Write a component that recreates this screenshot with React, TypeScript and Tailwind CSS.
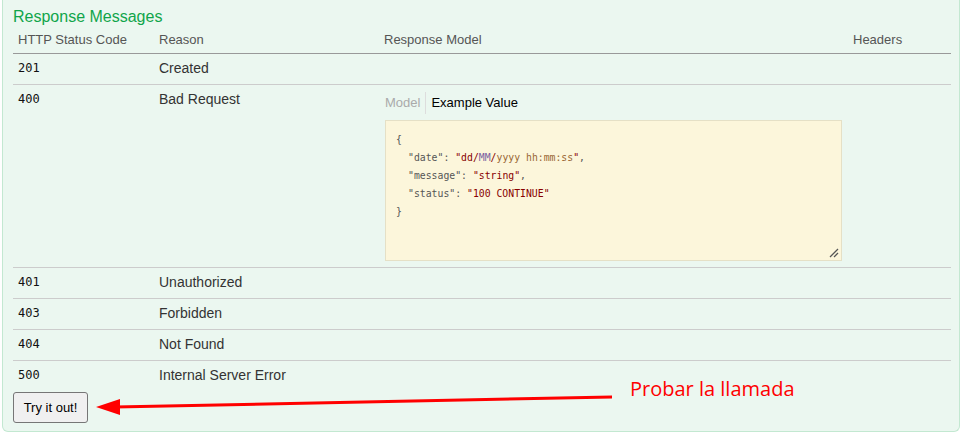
import React from "react";

const sans = { fontFamily: '"Liberation Sans", Arial, sans-serif' };
const mono = { fontFamily: '"DejaVu Sans Mono", monospace' };

function Row({ code, reason, children, last }: { code: string; reason: string; children?: React.ReactNode; last?: boolean }) {
  return (
    <tr className={last ? "" : "border-b border-[#cccccc]"}>
      <td className="pl-[5px] pt-[6px] pb-[8px] align-top text-[12px] leading-[16px] text-[#111]" style={mono}>{code}</td>
      <td className="pl-[5px] pt-[6px] pb-[8px] align-top text-[14px] leading-[16px] text-[#333]">{reason}</td>
      <td className="pl-[6px] pt-[6px] pb-[6px] align-top">{children}</td>
      <td></td>
    </tr>
  );
}

export default function App() {
  return (
    <div className="w-[960px] h-[433px] bg-white overflow-hidden relative" style={sans}>
      <div className="ml-[2px] w-[958px] h-[432px] bg-[#ebf7f0] border border-t-0 border-[#c3e8d1] rounded-b-[6px] px-[10px]">
        <h4 className="text-[16px] leading-[18px] pt-[8px] text-[#10a54a]">Response Messages</h4>
        <table className="mt-[6px] w-[938px] border-collapse table-fixed">
          <colgroup>
            <col className="w-[141px]" />
            <col className="w-[225px]" />
            <col className="w-[469px]" />
            <col className="w-[103px]" />
          </colgroup>
          <thead>
            <tr className="border-b border-[#999999]">
              <th className="pl-[5px] pb-[5px] text-left font-normal text-[13px] leading-[16px] text-[#555]">HTTP Status Code</th>
              <th className="pl-[5px] pb-[5px] text-left font-normal text-[13px] leading-[16px] text-[#555]">Reason</th>
              <th className="pl-[5px] pb-[5px] text-left font-normal text-[13px] leading-[16px] text-[#555]">Response Model</th>
              <th className="pl-[5px] pb-[5px] text-left font-normal text-[13px] leading-[16px] text-[#555]">Headers</th>
            </tr>
          </thead>
          <tbody>
            <Row code="201" reason="Created" />
            <Row code="400" reason="Bad Request">
              <div className="flex items-center text-[13px] leading-[18px] pt-[1px]">
                <span className="text-[#aaaaaa] pr-[5px]">Model</span>
                <span className="border-l border-[#dddddd] pl-[5px] text-[#000] h-[22px] flex items-center">Example Value</span>
              </div>
              <div className="mt-[6px] w-[457px] h-[141px] bg-[#fcf6db] border border-[#e5e0c6] relative px-[10px] pt-[10px] text-[9.8px] leading-[18px] text-[#555]" style={mono}>
                <div>{"{"}</div>
                <div className="pl-[12px]">"date": <span className="text-[#880000]">"dd/<span className="text-[#7a5fa0]">MM</span>/<span className="text-[#996633]">yyyy</span> <span className="text-[#996633]">hh:mm:ss</span>"</span>,</div>
                <div className="pl-[12px]">"message": <span className="text-[#880000]">"string"</span>,</div>
                <div className="pl-[12px]">"status": <span className="text-[#880000]">"100 CONTINUE"</span></div>
                <div>{"}"}</div>
                <svg className="absolute right-[2px] bottom-[2px]" width="10" height="10" viewBox="0 0 10 10">
                  <line x1="1" y1="9" x2="9" y2="1" stroke="#555" strokeWidth="1.3" />
                  <line x1="5" y1="9" x2="9" y2="5" stroke="#555" strokeWidth="1.3" />
                </svg>
              </div>
            </Row>
            <Row code="401" reason="Unauthorized" />
            <Row code="403" reason="Forbidden" />
            <Row code="404" reason="Not Found" />
            <Row code="500" reason="Internal Server Error" last />
          </tbody>
        </table>
        <button className="mt-[1px] w-[75px] h-[31px] bg-[#f0f0f0] border border-[#767676] rounded-[3px] text-[13px] text-[#000]" style={sans}>Try it out!</button>
      </div>
      <svg className="absolute left-0 top-0 pointer-events-none" width="960" height="433">
        <line x1="612" y1="397" x2="115" y2="407" stroke="#ff0000" strokeWidth="3" />
        <polygon points="96,407 120,399 120,415" fill="#ff0000" />
      </svg>
      <div className="absolute left-[630px] top-[376px] text-[20px] leading-[26px] text-[#ff0000]" style={{ fontFamily: '"Open Sans", sans-serif' }}>Probar la llamada</div>
    </div>
  );
}
